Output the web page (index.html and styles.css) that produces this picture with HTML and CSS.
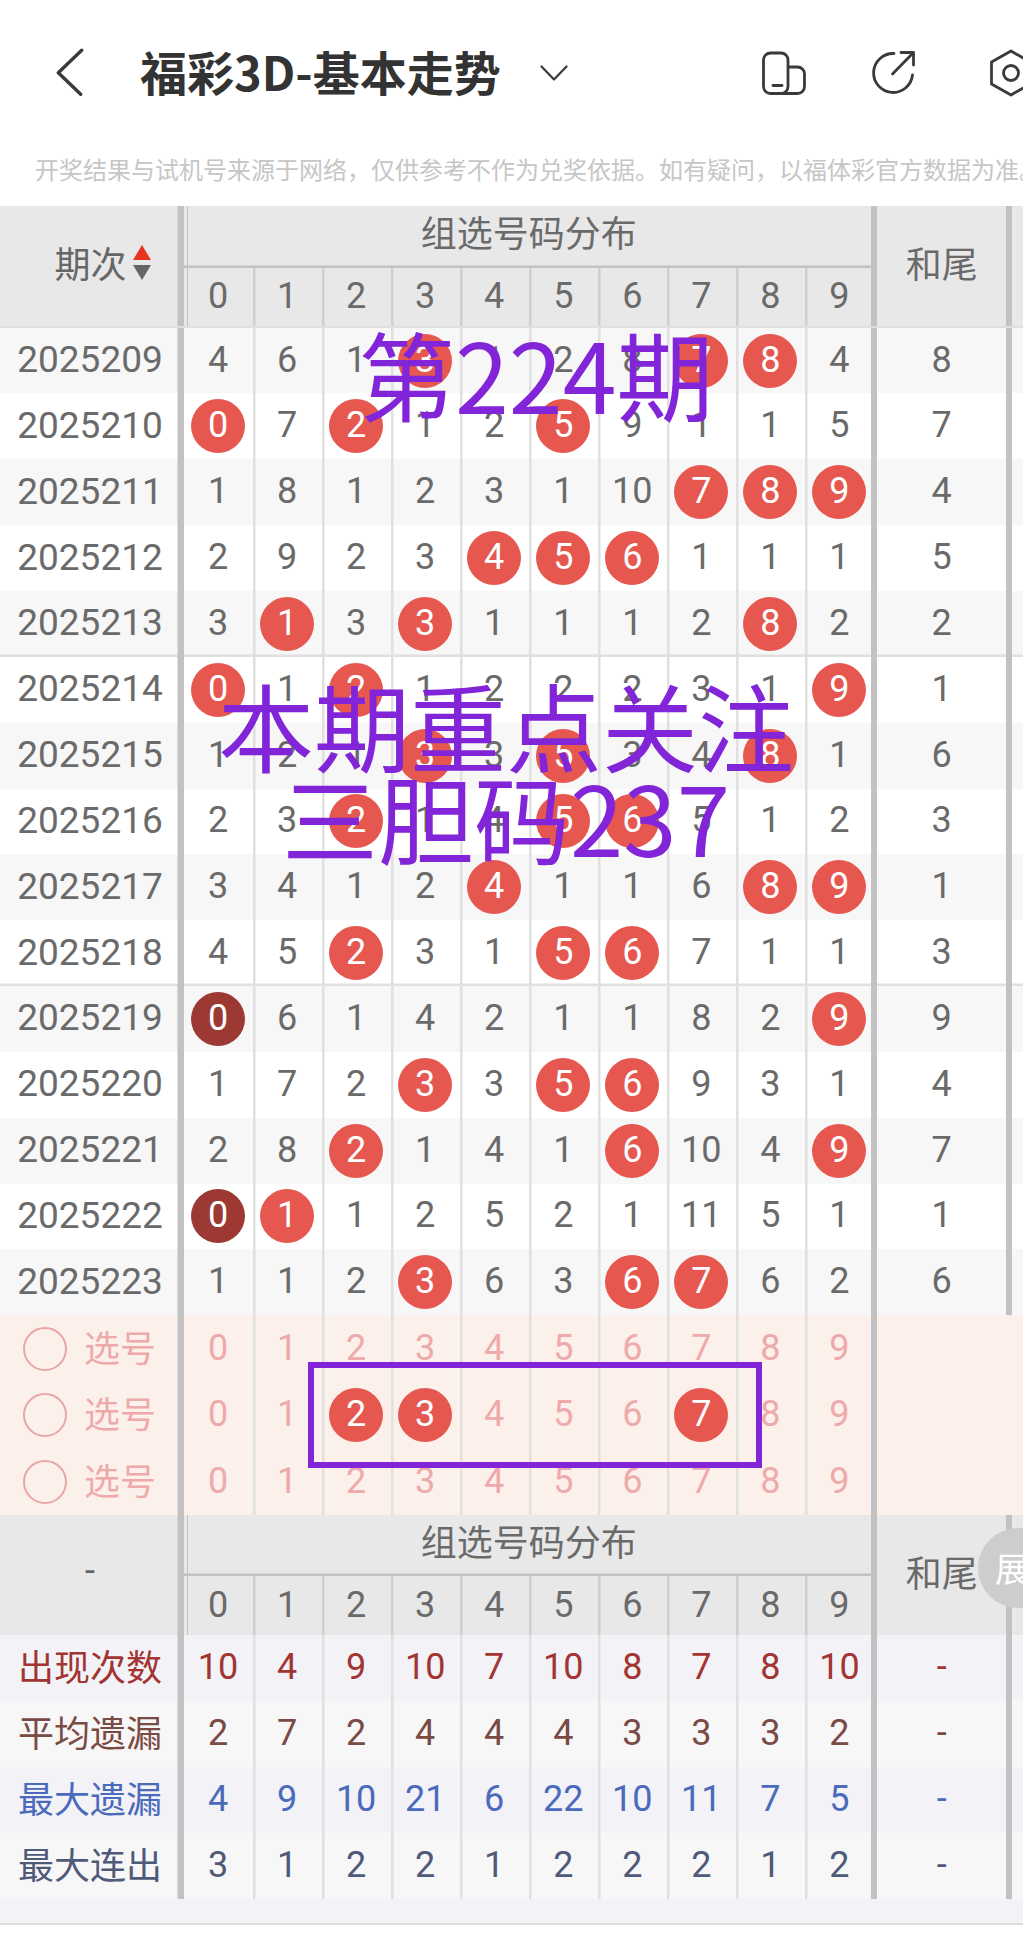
FILE: index.html
```html
<!DOCTYPE html>
<html lang="zh-CN">
<head>
<meta charset="utf-8">
<title>福彩3D-基本走势</title>
<link rel="stylesheet" href="styles.css">
</head>
<body>
<div class="page">
  <header class="topbar">
    <svg class="back" viewBox="0 0 30 50" width="30" height="50"><path d="M26.7 2.3 3.3 24.7 25.7 46.3"/></svg>
    <h1 class="title">福彩3D-基本走势</h1>
    <svg class="caret" viewBox="0 0 28 16" width="28" height="16"><path d="M1.5 1.5 14 14.5 26.500 1.500"/></svg>
    <svg class="icon ic-device" viewBox="0 0 46 44" width="46" height="44"><path d="M27 16h9.500a7 7 0 0 1 7 7v12.500a7 7 0 0 1-7 7H9.500a7 7 0 0 1-7-7V9a7 7 0 0 1 7-7H20a7 7 0 0 1 7 7v26.500a7 7 0 0 1-7 7"/><path d="M12 34.500h9"/></svg>
    <svg class="icon ic-share" viewBox="0 0 48 48" width="48" height="48"><path d="M25 4.500A19.500 19.500 0 1 0 43.500 26"/><path d="M23.500 25 44 4"/><path d="M32 3.500h12.500V16"/></svg>
    <svg class="icon ic-gear" viewBox="0 0 46 50" width="46" height="50"><path d="M23 3 42 14V36L23 47 3.500 36V14Z"/><circle cx="23" cy="25" r="7.500"/></svg>
  </header>
  <p class="notice">开奖结果与试机号来源于网络，仅供参考不作为兑奖依据。如有疑问，以福体彩官方数据为准。</p>

  <section class="head">
    <div class="h-label sortable">期次<span class="sort"><i class="up"></i><i class="down"></i></span></div>
    <div class="h-title">组选号码分布</div>
    <div class="h-tail">和尾</div>
    <div class="h-d first">0</div><div class="h-d">1</div><div class="h-d">2</div><div class="h-d">3</div><div class="h-d">4</div><div class="h-d">5</div><div class="h-d">6</div><div class="h-d">7</div><div class="h-d">8</div><div class="h-d end">9</div>
  </section>

  <div class="row odd"><div class="lab">2025209</div><div class="c">4</div><div class="c">6</div><div class="c">1</div><div class="c"><b class="ball">3</b></div><div class="c">1</div><div class="c">2</div><div class="c">8</div><div class="c"><b class="ball">7</b></div><div class="c"><b class="ball">8</b></div><div class="c">4</div><div class="tail">8</div></div>
  <div class="row"><div class="lab">2025210</div><div class="c"><b class="ball">0</b></div><div class="c">7</div><div class="c"><b class="ball">2</b></div><div class="c">1</div><div class="c">2</div><div class="c"><b class="ball">5</b></div><div class="c">9</div><div class="c">1</div><div class="c">1</div><div class="c">5</div><div class="tail">7</div></div>
  <div class="row odd"><div class="lab">2025211</div><div class="c">1</div><div class="c">8</div><div class="c">1</div><div class="c">2</div><div class="c">3</div><div class="c">1</div><div class="c">10</div><div class="c"><b class="ball">7</b></div><div class="c"><b class="ball">8</b></div><div class="c"><b class="ball">9</b></div><div class="tail">4</div></div>
  <div class="row"><div class="lab">2025212</div><div class="c">2</div><div class="c">9</div><div class="c">2</div><div class="c">3</div><div class="c"><b class="ball">4</b></div><div class="c"><b class="ball">5</b></div><div class="c"><b class="ball">6</b></div><div class="c">1</div><div class="c">1</div><div class="c">1</div><div class="tail">5</div></div>
  <div class="row odd group-end"><div class="lab">2025213</div><div class="c">3</div><div class="c"><b class="ball">1</b></div><div class="c">3</div><div class="c"><b class="ball">3</b></div><div class="c">1</div><div class="c">1</div><div class="c">1</div><div class="c">2</div><div class="c"><b class="ball">8</b></div><div class="c">2</div><div class="tail">2</div></div>
  <div class="row"><div class="lab">2025214</div><div class="c"><b class="ball">0</b></div><div class="c">1</div><div class="c"><b class="ball">2</b></div><div class="c">1</div><div class="c">2</div><div class="c">2</div><div class="c">2</div><div class="c">3</div><div class="c">1</div><div class="c"><b class="ball">9</b></div><div class="tail">1</div></div>
  <div class="row odd"><div class="lab">2025215</div><div class="c">1</div><div class="c">2</div><div class="c">1</div><div class="c"><b class="ball">3</b></div><div class="c">3</div><div class="c"><b class="ball">5</b></div><div class="c">3</div><div class="c">4</div><div class="c"><b class="ball">8</b></div><div class="c">1</div><div class="tail">6</div></div>
  <div class="row"><div class="lab">2025216</div><div class="c">2</div><div class="c">3</div><div class="c"><b class="ball">2</b></div><div class="c">1</div><div class="c">4</div><div class="c"><b class="ball">5</b></div><div class="c"><b class="ball">6</b></div><div class="c">5</div><div class="c">1</div><div class="c">2</div><div class="tail">3</div></div>
  <div class="row odd"><div class="lab">2025217</div><div class="c">3</div><div class="c">4</div><div class="c">1</div><div class="c">2</div><div class="c"><b class="ball">4</b></div><div class="c">1</div><div class="c">1</div><div class="c">6</div><div class="c"><b class="ball">8</b></div><div class="c"><b class="ball">9</b></div><div class="tail">1</div></div>
  <div class="row group-end"><div class="lab">2025218</div><div class="c">4</div><div class="c">5</div><div class="c"><b class="ball">2</b></div><div class="c">3</div><div class="c">1</div><div class="c"><b class="ball">5</b></div><div class="c"><b class="ball">6</b></div><div class="c">7</div><div class="c">1</div><div class="c">1</div><div class="tail">3</div></div>
  <div class="row odd"><div class="lab">2025219</div><div class="c"><b class="ball dark">0</b></div><div class="c">6</div><div class="c">1</div><div class="c">4</div><div class="c">2</div><div class="c">1</div><div class="c">1</div><div class="c">8</div><div class="c">2</div><div class="c"><b class="ball">9</b></div><div class="tail">9</div></div>
  <div class="row"><div class="lab">2025220</div><div class="c">1</div><div class="c">7</div><div class="c">2</div><div class="c"><b class="ball">3</b></div><div class="c">3</div><div class="c"><b class="ball">5</b></div><div class="c"><b class="ball">6</b></div><div class="c">9</div><div class="c">3</div><div class="c">1</div><div class="tail">4</div></div>
  <div class="row odd"><div class="lab">2025221</div><div class="c">2</div><div class="c">8</div><div class="c"><b class="ball">2</b></div><div class="c">1</div><div class="c">4</div><div class="c">1</div><div class="c"><b class="ball">6</b></div><div class="c">10</div><div class="c">4</div><div class="c"><b class="ball">9</b></div><div class="tail">7</div></div>
  <div class="row"><div class="lab">2025222</div><div class="c"><b class="ball dark">0</b></div><div class="c"><b class="ball">1</b></div><div class="c">1</div><div class="c">2</div><div class="c">5</div><div class="c">2</div><div class="c">1</div><div class="c">11</div><div class="c">5</div><div class="c">1</div><div class="tail">1</div></div>
  <div class="row odd"><div class="lab">2025223</div><div class="c">1</div><div class="c">1</div><div class="c">2</div><div class="c"><b class="ball">3</b></div><div class="c">6</div><div class="c">3</div><div class="c"><b class="ball">6</b></div><div class="c"><b class="ball">7</b></div><div class="c">6</div><div class="c">2</div><div class="tail">6</div></div>

  <div class="row pick"><div class="lab"><span class="radio"></span><span class="pick-text">选号</span></div><div class="c">0</div><div class="c">1</div><div class="c">2</div><div class="c">3</div><div class="c">4</div><div class="c">5</div><div class="c">6</div><div class="c">7</div><div class="c">8</div><div class="c">9</div><div class="tail"></div></div>
  <div class="row pick"><div class="lab"><span class="radio"></span><span class="pick-text">选号</span></div><div class="c">0</div><div class="c">1</div><div class="c"><b class="ball">2</b></div><div class="c"><b class="ball">3</b></div><div class="c">4</div><div class="c">5</div><div class="c">6</div><div class="c"><b class="ball">7</b></div><div class="c">8</div><div class="c">9</div><div class="tail"></div></div>
  <div class="row pick"><div class="lab"><span class="radio"></span><span class="pick-text">选号</span></div><div class="c">0</div><div class="c">1</div><div class="c">2</div><div class="c">3</div><div class="c">4</div><div class="c">5</div><div class="c">6</div><div class="c">7</div><div class="c">8</div><div class="c">9</div><div class="tail"></div></div>

  <section class="head head2">
    <div class="h-label">-</div>
    <div class="h-title">组选号码分布</div>
    <div class="h-tail">和尾</div>
    <div class="h-d first">0</div><div class="h-d">1</div><div class="h-d">2</div><div class="h-d">3</div><div class="h-d">4</div><div class="h-d">5</div><div class="h-d">6</div><div class="h-d">7</div><div class="h-d">8</div><div class="h-d end">9</div>
  </section>

  <div class="row stat s-count"><div class="lab">出现次数</div><div class="c">10</div><div class="c">4</div><div class="c">9</div><div class="c">10</div><div class="c">7</div><div class="c">10</div><div class="c">8</div><div class="c">7</div><div class="c">8</div><div class="c">10</div><div class="tail">-</div></div>
  <div class="row stat s-avg"><div class="lab">平均遗漏</div><div class="c">2</div><div class="c">7</div><div class="c">2</div><div class="c">4</div><div class="c">4</div><div class="c">4</div><div class="c">3</div><div class="c">3</div><div class="c">3</div><div class="c">2</div><div class="tail">-</div></div>
  <div class="row stat s-max"><div class="lab">最大遗漏</div><div class="c">4</div><div class="c">9</div><div class="c">10</div><div class="c">21</div><div class="c">6</div><div class="c">22</div><div class="c">10</div><div class="c">11</div><div class="c">7</div><div class="c">5</div><div class="tail">-</div></div>
  <div class="row stat s-run"><div class="lab">最大连出</div><div class="c">3</div><div class="c">1</div><div class="c">2</div><div class="c">2</div><div class="c">1</div><div class="c">2</div><div class="c">2</div><div class="c">2</div><div class="c">1</div><div class="c">2</div><div class="tail">-</div></div>
  <div class="foot"></div>

  <div class="expand">展</div>
  <div class="mark mark-issue">第224期</div>
  <div class="mark mark-focus">本期重点关注<br>三胆码237</div>
  <div class="mark-box"></div>
</div>
</body>
</html>
```
FILE: styles.css
```css
* { box-sizing: border-box; }
html, body { margin: 0; padding: 0; background: #fff; }
.page {
  position: relative;
  width: 1023px;
  height: 1938px;
  overflow: hidden;
  font-family: Roboto, "Noto Sans CJK SC", sans-serif;
  color: #6a6a6a;
  --cols: 183.5px repeat(10, 69.05px) 1fr;
  --bar: #c2c2c2;
  --sep: #e0e0e0;
}

/* top bar */
.topbar { display: flex; align-items: center; height: 145px; padding-left: 55px; }
.topbar svg { flex: none; fill: none; stroke: #3a3a3a; stroke-linecap: round; stroke-linejoin: round; }
.back { stroke-width: 3.4; }
.title {
  flex: none;
  margin: 0 0 0 55px;
  width: 400px;
  padding-bottom: 4px;
  font: 700 47px/1 "Noto Sans CJK SC", sans-serif;
  color: #333;
  white-space: nowrap;
}
.caret { stroke-width: 2.2; }
.icon { stroke-width: 2.800; }
.ic-device { margin-left: 193px; }
.ic-share { margin-left: 62px; }
.ic-gear { margin-left: 71px; }
.notice {
  margin: 0;
  height: 61px;
  padding-left: 35px;
  font: 400 24px/48px "Noto Sans CJK SC", sans-serif;
  color: #c6c6c6;
  white-space: nowrap;
  overflow: hidden;
}

/* table heads */
.head {
  display: grid;
  grid-template-columns: var(--cols);
  grid-template-rows: 61.5px 58px;
  height: 121.6px;
  background: #e8e8e8;
  border-bottom: 2.100px solid var(--sep);
}
.head2 { height: 120px; grid-template-rows: 61.5px 58.5px; border-bottom: 0; }
.h-label, .h-title, .h-tail, .h-d { display: flex; align-items: center; justify-content: center; }
.h-label {
  grid-row: 1 / span 2;
  padding: 0 3.5px 8px 0;
  box-shadow: inset -6.5px 0 0 var(--bar);
  font-size: 36px;
  color: #666;
}
.h-label.sortable { padding: 0 3.5px 7px 25px; font-family: "Noto Sans CJK SC", sans-serif; }
.h-title {
  grid-column: 2 / span 10;
  padding-bottom: 12px;
  box-shadow: inset 0 -2.5px 0 var(--bar), inset 3px 0 0 #e8e8e8, inset 4px 0 0 var(--bar), inset -3px 0 0 var(--bar);
  font-family: "Noto Sans CJK SC", sans-serif;
  font-size: 36px;
}
.h-tail {
  grid-column: 12;
  grid-row: 1 / span 2;
  padding: 0 17px 8px 3.3px;
  background: linear-gradient(90deg, var(--bar) 3.3px, transparent 3.3px, transparent 132px, var(--bar) 132px, var(--bar) 138px, transparent 138px);
  font-family: "Noto Sans CJK SC", sans-serif;
  font-size: 36px;
}
.h-d { padding-bottom: 2px; font-size: 36px; box-shadow: inset 2.5px 0 0 #cfcfcf; }
.h-d.first { box-shadow: inset 3px 0 0 #e8e8e8, inset 4px 0 0 var(--bar); }
.h-d.end { box-shadow: inset 2.5px 0 0 #cfcfcf, inset -3px 0 0 var(--bar); }
.sort { display: flex; flex-direction: column; gap: 5px; margin-left: 6px; }
.sort i { display: block; width: 0; height: 0; border-left: 9px solid transparent; border-right: 9px solid transparent; }
.sort .up { border-bottom: 15px solid #e8331f; }
.sort .down { border-top: 15px solid #666; }

/* data rows */
.row {
  display: grid;
  grid-template-columns: var(--cols);
  height: 65.85px;
  background: #fff;
  font-size: 36px;
}
.row.odd { background: #f7f7f7; }
.row.group-end { box-shadow: inset 0 -2.500px 0 var(--sep); }
.lab, .c, .tail { display: flex; align-items: center; justify-content: center; padding-bottom: 2px; }
.lab { padding-right: 3.5px; font-size: 37px; box-shadow: inset -6.5px 0 0 var(--bar); }
.c { box-shadow: inset 2.5px 0 0 var(--sep); }
.lab + .c { box-shadow: none; }
.c:nth-child(11) { box-shadow: inset 2.5px 0 0 var(--sep), inset -3px 0 0 var(--bar); }
.tail {
  padding: 0 17px 2px 3.3px;
  background: linear-gradient(90deg, var(--bar) 3.3px, transparent 3.3px, transparent 132px, var(--bar) 132px, var(--bar) 138px, transparent 138px);
}
.ball {
  display: flex;
  align-items: center;
  justify-content: center;
  flex: none;
  width: 54px;
  height: 54px;
  margin-bottom: -2px;
  padding-bottom: 2px;
  border-radius: 50%;
  background: #e5574f;
  color: #fff;
  font-weight: 400;
}
.ball.dark { background: #9b3932; }

/* number picker rows */
.pick { height: 66.5px; background: #fcf0eb; color: #eeaaaa; }
.pick .lab {
  justify-content: flex-start;
  gap: 17px;
  padding: 0 3.5px 0 23px;
  font-family: "Noto Sans CJK SC", sans-serif;
  font-size: 36px;
  white-space: nowrap;
}
.pick-text { padding-bottom: 6px; }
.pick .tail { background: linear-gradient(90deg, var(--bar) 3.3px, transparent 3.3px); }
.radio { flex: none; width: 44px; height: 44px; border: 2.5px solid #e8a6a4; border-radius: 50%; }

/* statistics rows */
.stat { height: 66px; }
.stat .lab { padding-bottom: 6px; font-family: "Noto Sans CJK SC", sans-serif; font-size: 36px; }
.s-count, .s-max { background: #f2f2f7; }
.s-avg, .s-run { background: #f7f7f7; }
.s-count { color: #a23431; }
.s-avg { color: #7a4a45; }
.s-max { color: #4a6abb; }
.s-run { color: #4f5a78; }
.foot { height: 26px; background: #f2f2f7; border-bottom: 2px solid #dcdcdc; }

/* floating parts */
.expand {
  position: absolute;
  left: 978px;
  top: 1528px;
  width: 80px;
  height: 80px;
  padding-left: 17px;
  border-radius: 50%;
  background: #cdcdcd;
  color: #fff;
  font: 400 34px/80px "Noto Sans CJK SC", sans-serif;
}
.mark {
  position: absolute;
  font: 400 97px/92px "Noto Sans CJK SC", sans-serif;
  color: #8224d8;
  text-align: center;
  white-space: nowrap;
}
.mark-issue { left: 358px; top: 326px; }
.mark-focus { left: 218px; top: 678px; font-size: 96px; }
.mark-box {
  position: absolute;
  left: 308px;
  top: 1362px;
  width: 454px;
  height: 106px;
  border: 6px solid #8224d8;
}
```
